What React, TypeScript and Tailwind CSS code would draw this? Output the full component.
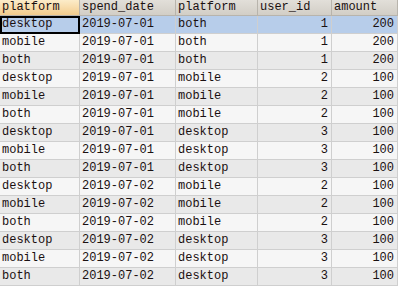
import React from "react";

const rows: [string, string, string, number, number][] = [
  ["desktop", "2019-07-01", "both", 1, 200],
  ["mobile", "2019-07-01", "both", 1, 200],
  ["both", "2019-07-01", "both", 1, 200],
  ["desktop", "2019-07-01", "mobile", 2, 100],
  ["mobile", "2019-07-01", "mobile", 2, 100],
  ["both", "2019-07-01", "mobile", 2, 100],
  ["desktop", "2019-07-01", "desktop", 3, 100],
  ["mobile", "2019-07-01", "desktop", 3, 100],
  ["both", "2019-07-01", "desktop", 3, 100],
  ["desktop", "2019-07-02", "mobile", 2, 100],
  ["mobile", "2019-07-02", "mobile", 2, 100],
  ["both", "2019-07-02", "mobile", 2, 100],
  ["desktop", "2019-07-02", "desktop", 3, 100],
  ["mobile", "2019-07-02", "desktop", 3, 100],
  ["both", "2019-07-02", "desktop", 3, 100],
];

const headers = ["platform", "spend_date", "platform", "user_id", "amount"];

export default function App() {
  return (
    <div
      className="w-[398px] h-[287px] overflow-hidden bg-white text-[12px] text-[#1a1010]"
      style={{ fontFamily: '"Courier New", "Nimbus Mono PS", "FreeMono", "Liberation Mono", monospace' }}
    >
      <div className="grid grid-cols-[80px_96px_82px_74px_66px]">
        {headers.map((h, i) => (
          <div
            key={i}
            className={
              "h-[16px] leading-[15px] pl-[2px] border-r border-b border-[#b8b4ac] " +
              (i === 0
                ? "bg-gradient-to-b from-[#fcecc9] to-[#f3cc8c]"
                : "bg-gradient-to-b from-[#e2dfd9] to-[#d2cec6]")
            }
          >
            {h}
          </div>
        ))}
        {rows.map((r, ri) => {
          const sel = ri === 0;
          const bg = sel ? "bg-[#b7cdea]" : ri % 2 === 0 ? "bg-[#e9e9e9]" : "bg-[#f6f6f6]";
          return r.map((c, ci) => (
            <div
              key={ri + "-" + ci}
              className={
                "h-[18px] leading-[17px] border-r border-b border-[#cfcfcf] whitespace-nowrap " +
                bg +
                " " +
                (ci >= 3 ? "text-right pr-[3px]" : "pl-[2px]") +
                (sel && ci === 0 ? " outline-2 outline-black -outline-offset-2" : "")
              }
            >
              {c}
            </div>
          ));
        })}
      </div>
    </div>
  );
}
